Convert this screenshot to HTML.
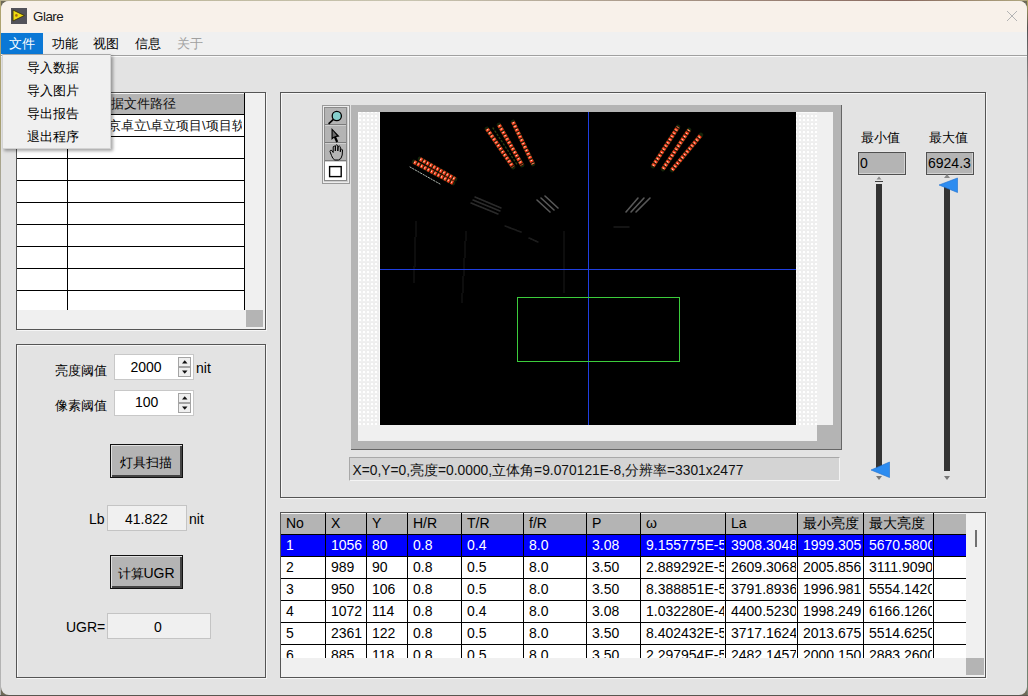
<!DOCTYPE html>
<html><head><meta charset="utf-8">
<style>
*{box-sizing:border-box;margin:0;padding:0}
html,body{width:1028px;height:696px;overflow:hidden;background:#6e6a58}
body{position:relative;font-family:"Liberation Sans",sans-serif;font-size:13px;color:#000}
.a{position:absolute}
.t{position:absolute;white-space:nowrap;line-height:1}
.fr{position:absolute;border:1px solid #555;box-shadow:inset 1px 1px 0 #f6f6f6, 1px 1px 0 #f6f6f6}
.hl{position:absolute;background:#f6f6f6}
.spin{width:13px;height:21px;background:#e6e6e6;border:1px solid #c0c0c0}
.btn{background:#b4b4b4;border:1px solid #111;box-shadow:inset 1px 1px 0 #e0e0e0, inset -2px -2px 0 #444}
.cell{overflow:hidden;font-size:14px}
</style></head><body>
<!-- desktop edges -->
<div class="a" style="left:0;top:0;width:1px;height:696px;background:linear-gradient(#b0a470 0,#a8a070 120px,#a8a8a4 200px,#b4b4b4 100%)"></div>
<div class="a" style="left:0;top:0;width:1028px;height:1px;background:linear-gradient(90deg,#b8b090,#c8c4b0 40%,#8a6a60 88%,#b0a880 100%)"></div>
<div class="a" style="left:1027px;top:0;width:1px;height:696px;background:linear-gradient(#b8a860,#505050 4%,#8a8a88 12%,#a4a4a4 40%,#7a8a78 80%,#708070 100%)"></div>
<div class="a" style="left:0;top:695px;width:1028px;height:1px;background:#5a5650"></div>
<!-- window -->
<div class="a" style="left:1px;top:1px;width:1026px;height:694px;background:#e3e3e3;border-radius:8px;overflow:hidden"></div>
<!-- title bar -->
<div class="a" style="left:1px;top:1px;width:1026px;height:31px;background:#f8f1ea;border-radius:8px 8px 0 0"></div>
<div class="a" style="left:11px;top:8px;width:16px;height:16px;background:#52525a"></div>
<svg class="a" style="left:11px;top:8px" width="16" height="16"><polygon points="2,2 13.4,7.5 2,13" fill="#f0dc10" stroke="#3a3410" stroke-width="0.9"/><circle cx="5.4" cy="7.4" r="1.3" fill="#a86a10"/></svg>
<div class="t" style="left:33px;top:9.5px;font-size:13.4px;letter-spacing:-0.5px;color:#1a1a1a">Glare</div>
<svg class="a" style="left:1006px;top:10px" width="12" height="12"><path d="M1 1L11 11M11 1L1 11" stroke="#b4b4b4" stroke-width="1"/></svg>
<!-- menu bar -->
<div class="a" style="left:1px;top:32px;width:1026px;height:23px;background:#f0f0f0"></div>
<div class="a" style="left:1px;top:33px;width:42px;height:21px;background:#0a78d6"></div>
<div class="t" style="left:9px;top:37px;color:#fff">文件</div>
<div class="t" style="left:52px;top:37px">功能</div>
<div class="t" style="left:93px;top:37px">视图</div>
<div class="t" style="left:135px;top:37px">信息</div>
<div class="t" style="left:177px;top:37px;color:#a0a0a0">关于</div>
<div class="a" style="left:1px;top:55px;width:1026px;height:1px;background:#a0a0a0"></div>
<div class="a" style="left:1px;top:56px;width:1026px;height:1px;background:#fafafa"></div>

<!-- left top table frame -->
<div class="fr" style="left:16px;top:92px;width:250px;height:238px;background:#f0f0f0"></div>
<div class="a" style="left:17px;top:93px;width:228px;height:217px;background:#fff"></div>
<div class="a" style="left:17px;top:93px;width:228px;height:21px;background:#b4b4b4;border-top:1px solid #f6f6f6"></div>
<div class="a" style="left:17px;top:114px;width:228px;height:1px;background:#000"></div>
<div class="a" style="left:17px;top:136px;width:228px;height:1px;background:#000"></div>
<div class="a" style="left:17px;top:158px;width:228px;height:1px;background:#000"></div>
<div class="a" style="left:17px;top:180px;width:228px;height:1px;background:#000"></div>
<div class="a" style="left:17px;top:202px;width:228px;height:1px;background:#000"></div>
<div class="a" style="left:17px;top:224px;width:228px;height:1px;background:#000"></div>
<div class="a" style="left:17px;top:246px;width:228px;height:1px;background:#000"></div>
<div class="a" style="left:17px;top:268px;width:228px;height:1px;background:#000"></div>
<div class="a" style="left:17px;top:290px;width:228px;height:1px;background:#000"></div>
<div class="a" style="left:67px;top:93px;width:1px;height:217px;background:#000"></div>
<div class="a" style="left:244px;top:93px;width:1px;height:217px;background:#000"></div>
<div class="a" style="left:68px;top:93px;width:176px;height:21px;overflow:hidden"><div class="t" style="left:30px;top:4px;color:#111">数据文件路径</div></div>
<div class="a" style="left:68px;top:115px;width:174px;height:21px;overflow:hidden"><div class="t" style="left:26.5px;top:4px;color:#111">北京卓立\卓立项目\项目软件</div></div>

<div class="a" style="left:246px;top:310px;width:17px;height:17px;background:#b4b4b4"></div>

<!-- left bottom panel frame -->
<div class="fr" style="left:16px;top:344px;width:250px;height:334px"></div>


<!-- left bottom panel controls -->
<div class="t" style="left:55px;top:364px">亮度阈值</div>
<div class="a" style="left:114px;top:354px;width:80px;height:26px;background:#fff;border:1px solid #c8c8c8"></div>
<div class="t" style="left:130.5px;top:360px;font-size:14px">2000</div>
<svg class="a" style="left:178px;top:357px" width="13" height="20"><rect x="0.5" y="0.5" width="12" height="9" fill="#efefef" stroke="#a4a4a4"/><rect x="0.5" y="10.5" width="12" height="9" fill="#efefef" stroke="#a4a4a4"/><path d="M4 6.5L9.5 6.5L6.75 3.2Z" fill="#111"/><path d="M4 13.5L9.5 13.5L6.75 16.8Z" fill="#111"/></svg>
<div class="t" style="left:196px;top:361px;font-size:14px">nit</div>
<div class="t" style="left:55px;top:399px">像素阈值</div>
<div class="a" style="left:114px;top:390px;width:80px;height:26px;background:#fff;border:1px solid #c8c8c8"></div>
<div class="t" style="left:135px;top:395px;font-size:14px">100</div>
<svg class="a" style="left:178px;top:393px" width="13" height="20"><rect x="0.5" y="0.5" width="12" height="9" fill="#efefef" stroke="#a4a4a4"/><rect x="0.5" y="10.5" width="12" height="9" fill="#efefef" stroke="#a4a4a4"/><path d="M4 6.5L9.5 6.5L6.75 3.2Z" fill="#111"/><path d="M4 13.5L9.5 13.5L6.75 16.8Z" fill="#111"/></svg>

<div class="a btn" style="left:110px;top:444px;width:73px;height:34px"></div>
<div class="t" style="left:120px;top:455.5px;font-size:13px">灯具扫描</div>

<div class="t" style="left:89px;top:512px;font-size:14px">Lb</div>
<div class="a" style="left:107px;top:505px;width:80px;height:26px;background:#f0f0f0;border:1px solid #c4c4c4"></div>
<div class="t" style="left:125px;top:512px;font-size:14px">41.822</div>
<div class="t" style="left:189px;top:512px;font-size:14px">nit</div>

<div class="a btn" style="left:110px;top:555px;width:73px;height:34px"></div>
<div class="t" style="left:117.5px;top:566px;font-size:13px">计算<span style="font-size:14px">UGR</span></div>

<div class="t" style="left:66px;top:620px;font-size:14px">UGR=</div>
<div class="a" style="left:107px;top:613px;width:104px;height:26px;background:#f0f0f0;border:1px solid #c4c4c4"></div>
<div class="t" style="left:154px;top:620px;font-size:14px">0</div>

<!-- image panel frame -->
<div class="fr" style="left:280px;top:92px;width:706px;height:406px"></div>


<!-- image display -->
<div class="a" style="left:351px;top:105px;width:491px;height:345px;background:#b4b4b4;border-right:1px solid #666;border-bottom:1px solid #666"></div>
<svg class="a" style="left:358px;top:112px" width="459" height="313"><defs><pattern id="dots" x="0" y="-1" width="4" height="4" patternUnits="userSpaceOnUse"><rect width="4" height="4" fill="#eeeeee"/><rect x="0" y="1.5" width="4" height="1" fill="#f3f3f3"/><rect x="1" y="0" width="2" height="2" fill="#ffffff"/></pattern></defs><rect x="0" y="0" width="459" height="313" fill="url(#dots)"/><rect x="0" y="0" width="1" height="313" fill="#fafafa"/><rect x="21" y="0" width="1" height="313" fill="#fafafa"/><rect x="437" y="0" width="22" height="1" fill="#fafafa"/></svg>
<div class="a" style="left:817px;top:112px;width:16px;height:313px;background:#f0f0f0"></div>
<div class="a" style="left:358px;top:425px;width:459px;height:16px;background:#f0f0f0"></div>
<div class="a" style="left:380px;top:112px;width:416px;height:313px;background:#000;overflow:hidden">
<svg width="416" height="313" style="position:absolute;left:0;top:0">
 <g stroke-linecap="round">
 <defs><filter id="bl" x="-20%" y="-20%" width="140%" height="140%"><feGaussianBlur stdDeviation="0.6"/></filter></defs>
 <!-- dim structures -->
 <g filter="url(#bl)">
 <g stroke="#2c2c2c" stroke-width="1.5">
  <line x1="91" y1="91" x2="118" y2="102"/><line x1="93" y1="88" x2="120" y2="99"/><line x1="95" y1="85" x2="121" y2="96"/>
 </g>
 <g stroke="#585858" stroke-width="1.6">
  <line x1="157" y1="88" x2="170" y2="100"/><line x1="161" y1="86" x2="174" y2="98"/><line x1="165" y1="84" x2="178" y2="96"/>
  <line x1="246" y1="100" x2="258" y2="86"/><line x1="251" y1="100" x2="264" y2="86"/><line x1="256" y1="100" x2="270" y2="86"/>
 </g>
 <g stroke="#1e1e1e" stroke-width="1.5">
  <line x1="125" y1="114" x2="141" y2="120"/><line x1="149" y1="126" x2="158" y2="130"/><line x1="234" y1="115" x2="249" y2="115"/>
 </g>
 <g stroke="#070707" stroke-width="3">
  <line x1="36" y1="110" x2="34" y2="170"/><line x1="86" y1="120" x2="82" y2="190"/><line x1="184" y1="120" x2="184" y2="180"/>
 </g>
 </g>
 <!-- lamps -->
 <g stroke="#14240a" stroke-width="4.6">
  <line x1="34" y1="50" x2="73" y2="71"/>
  <line x1="40" y1="47" x2="75" y2="67"/>
  <line x1="107" y1="17" x2="133" y2="55"/>
  <line x1="119" y1="13" x2="142" y2="53"/>
  <line x1="133" y1="10" x2="153" y2="52"/>
  <line x1="273" y1="54" x2="298" y2="15"/>
  <line x1="283" y1="57" x2="309" y2="18"/>
  <line x1="292" y1="58" x2="321" y2="23"/>
 </g>
 <g stroke="#4a6a1a" stroke-width="1.4" stroke-dasharray="1.2 2.6" opacity="0.6">
  <line x1="113" y1="16" x2="138" y2="54"/>
 </g>
 <g stroke="#ff2a16" stroke-width="3.8" stroke-dasharray="2.6 1.2" stroke-linecap="butt">
  <line x1="34" y1="50" x2="73" y2="71"/>
  <line x1="40" y1="47" x2="75" y2="67"/>
  <line x1="107" y1="17" x2="133" y2="55"/>
  <line x1="119" y1="13" x2="142" y2="53"/>
  <line x1="133" y1="10" x2="153" y2="52"/>
  <line x1="273" y1="54" x2="298" y2="15"/>
  <line x1="283" y1="57" x2="309" y2="18"/>
  <line x1="292" y1="58" x2="321" y2="23"/>
 </g>
 <g stroke="#a0c040" stroke-width="3.2" stroke-dasharray="0.6 3.2" stroke-dashoffset="3.1" stroke-linecap="butt" opacity="0.65">
  <line x1="34" y1="50" x2="73" y2="71"/>
  <line x1="40" y1="47" x2="75" y2="67"/>
  <line x1="107" y1="17" x2="133" y2="55"/>
  <line x1="119" y1="13" x2="142" y2="53"/>
  <line x1="133" y1="10" x2="153" y2="52"/>
  <line x1="273" y1="54" x2="298" y2="15"/>
  <line x1="283" y1="57" x2="309" y2="18"/>
  <line x1="292" y1="58" x2="321" y2="23"/>
 </g>
 <g stroke="#ffd8c8" stroke-width="1.4" stroke-dasharray="1 2.8" stroke-dashoffset="-0.4" stroke-linecap="butt">
  <line x1="34" y1="50" x2="73" y2="71"/>
  <line x1="40" y1="47" x2="75" y2="67"/>
  <line x1="107" y1="17" x2="133" y2="55"/>
  <line x1="119" y1="13" x2="142" y2="53"/>
  <line x1="133" y1="10" x2="153" y2="52"/>
  <line x1="273" y1="54" x2="298" y2="15"/>
  <line x1="283" y1="57" x2="309" y2="18"/>
  <line x1="292" y1="58" x2="321" y2="23"/>
 </g>
 <g stroke="#b0b8b0" stroke-width="1" stroke-dasharray="1.5 1.5">
  <line x1="30" y1="55" x2="60" y2="72"/>
 </g>
 </g>
 <line x1="0" y1="157.5" x2="416" y2="157.5" stroke="#1f3fe0" stroke-width="1"/>
 <line x1="208.5" y1="0" x2="208.5" y2="313" stroke="#1f3fe0" stroke-width="1"/>
 <rect x="137.5" y="185.5" width="162" height="64" fill="none" stroke="#3ccc3c" stroke-width="1"/>
</svg>
</div>
<!-- palette -->
<div class="a" style="left:322px;top:105px;width:28px;height:79px;background:#cfcfcf;border:1px solid #9a9a9a;box-shadow:inset 1px 1px 0 #ececec, inset -1px -1px 0 #ececec"></div>
<div class="a" style="left:324px;top:107px;width:23px;height:74px;border:1px solid #8a8a8a"></div>
<div class="a" style="left:325px;top:108px;width:21px;height:17px;background:#b4b4b4;border-bottom:1px solid #7c7c7c"></div>
<div class="a" style="left:325px;top:126px;width:21px;height:17px;background:#b4b4b4;border-bottom:1px solid #7c7c7c"></div>
<div class="a" style="left:325px;top:144px;width:21px;height:17px;background:#b4b4b4;border-bottom:1px solid #7c7c7c"></div>
<div class="a" style="left:325px;top:162px;width:21px;height:18px;background:#fff"></div>
<svg class="a" style="left:325px;top:108px" width="21" height="72">
 <circle cx="11.8" cy="8" r="4.6" fill="#86cfcc" stroke="#000" stroke-width="1.3"/>
 <line x1="8.4" y1="11.4" x2="3.6" y2="15.8" stroke="#000" stroke-width="1.7"/>
 <path d="M6.5 20 L6.5 32 L9 29.8 L11.2 34.6 L13.2 33.6 L11.2 29 L14.6 28.6 Z" fill="#000"/>
 <path d="M7.6 22.6 L7.6 29.2 L11.8 27.6 Z" fill="#6a6a6a"/>
 <path d="M6.5 47.5 L5 43.5 Q5 41.8 6.8 42.4 L8.2 44.5 L8.2 38.8 Q9.2 37.2 10.3 38.8 L10.3 43 L10.6 37.6 Q11.7 36 12.8 37.6 L12.8 43 L13.2 38.6 Q14.3 37.2 15.3 38.8 L15.3 43.8 L15.8 41.6 Q16.8 40.6 17.5 41.8 L17.2 47 Q16.5 51.5 13.4 52 L9.8 52 Q7.6 51 6.5 47.5 Z" fill="none" stroke="#000" stroke-width="1"/>
 <rect x="4.6" y="58.6" width="11.6" height="10" fill="none" stroke="#000" stroke-width="1.4"/>
</svg>
<!-- status bar -->
<div class="a" style="left:349px;top:457px;width:491px;height:24px;background:#d4d4d4;border-top:1px solid #a8a8a8;border-left:1px solid #a8a8a8;border-bottom:1px solid #f4f4f4;border-right:1px solid #f4f4f4"></div>
<div class="t" style="left:352.5px;top:463.5px;font-size:13.8px;color:#111">X=0,Y=0,亮度=0.0000,立体角=9.070121E-8,分辨率=3301x2477</div>

<!-- sliders -->
<div class="t" style="left:861px;top:131px">最小值</div>
<div class="t" style="left:929px;top:131px">最大值</div>
<div class="a" style="left:858px;top:152px;width:48px;height:23px;background:#b4b4b4;border:1px solid #505050;box-shadow:inset -1px -1px 0 #d2d2d2, 0 0 0 1px #e8e8e8"></div>
<div class="a" style="left:926px;top:152px;width:48px;height:23px;background:#b4b4b4;border:1px solid #505050;box-shadow:inset -1px -1px 0 #d2d2d2, 0 0 0 1px #e8e8e8"></div>
<div class="t" style="left:860px;top:156px;font-size:14px">0</div>
<div class="t" style="left:928px;top:156px;font-size:14px;">6924.3</div>
<div class="a" style="left:876px;top:184px;width:6px;height:286px;background:#333"></div>
<div class="a" style="left:944px;top:183px;width:6px;height:288px;background:#333"></div>
<svg class="a" style="left:860px;top:174px" width="100" height="310">
 <path d="M16.5 5.5 L21.5 5.5 L19 2.5 Z" fill="#8a8a8a"/><line x1="15" y1="7.5" x2="23" y2="7.5" stroke="#404040"/>
 <path d="M84 4 L90 4 L87 0 Z" fill="#888"/>
 <path d="M16 302 L22 302 L19 306 Z" fill="#777"/>
 <path d="M84 302 L90 302 L87 306 Z" fill="#777"/>
 <path d="M11 296 L29.5 288 L29.5 303.5 Z" fill="#2d8cf0" stroke="#1c6fd0" stroke-width="0.6"/>
 <path d="M79 11 L97.5 4 L97.5 18.5 Z" fill="#2d8cf0" stroke="#1c6fd0" stroke-width="0.6"/>
</svg>

<!-- bottom table frame -->
<div class="fr" style="left:280px;top:512px;width:706px;height:166px;background:#f0f0f0"></div>

<!-- bottom table -->
<div class="a" style="left:281px;top:513px;width:685px;height:145px;background:#fff;overflow:hidden">
<div class="a" style="left:0;top:0;width:685px;height:22px;background:#b4b4b4;border-top:1px solid #f6f6f6"></div>
<div class="a" style="left:0;top:22px;width:685px;height:22px;background:#0000ff"></div>
<div class="a" style="left:0;top:21px;width:685px;height:1px;background:#000"></div>
<div class="a" style="left:0;top:43px;width:685px;height:1px;background:#000"></div>
<div class="a" style="left:0;top:65px;width:685px;height:1px;background:#000"></div>
<div class="a" style="left:0;top:87px;width:685px;height:1px;background:#000"></div>
<div class="a" style="left:0;top:109px;width:685px;height:1px;background:#000"></div>
<div class="a" style="left:0;top:131px;width:685px;height:1px;background:#000"></div>
<div class="a" style="left:44px;top:0;width:1px;height:145px;background:#000"></div>
<div class="a" style="left:85px;top:0;width:1px;height:145px;background:#000"></div>
<div class="a" style="left:126px;top:0;width:1px;height:145px;background:#000"></div>
<div class="a" style="left:180px;top:0;width:1px;height:145px;background:#000"></div>
<div class="a" style="left:242px;top:0;width:1px;height:145px;background:#000"></div>
<div class="a" style="left:305px;top:0;width:1px;height:145px;background:#000"></div>
<div class="a" style="left:359px;top:0;width:1px;height:145px;background:#000"></div>
<div class="a" style="left:444px;top:0;width:1px;height:145px;background:#000"></div>
<div class="a" style="left:516px;top:0;width:1px;height:145px;background:#000"></div>
<div class="a" style="left:582px;top:0;width:1px;height:145px;background:#000"></div>
<div class="a" style="left:652px;top:0;width:1px;height:145px;background:#000"></div>
<div class="a cell" style="left:0px;top:0;width:42px;height:20px"><span class="t" style="left:5px;top:3.4px">No</span></div>
<div class="a cell" style="left:45px;top:0;width:38px;height:20px"><span class="t" style="left:5px;top:3.4px">X</span></div>
<div class="a cell" style="left:86px;top:0;width:38px;height:20px"><span class="t" style="left:5px;top:3.4px">Y</span></div>
<div class="a cell" style="left:127px;top:0;width:51px;height:20px"><span class="t" style="left:5px;top:3.4px">H/R</span></div>
<div class="a cell" style="left:181px;top:0;width:59px;height:20px"><span class="t" style="left:5px;top:3.4px">T/R</span></div>
<div class="a cell" style="left:243px;top:0;width:60px;height:20px"><span class="t" style="left:5px;top:3.4px">f/R</span></div>
<div class="a cell" style="left:306px;top:0;width:51px;height:20px"><span class="t" style="left:5px;top:3.4px">P</span></div>
<div class="a cell" style="left:360px;top:0;width:82px;height:20px"><span class="t" style="left:5px;top:3.4px">ω</span></div>
<div class="a cell" style="left:445px;top:0;width:69px;height:20px"><span class="t" style="left:5px;top:3.4px">La</span></div>
<div class="a cell" style="left:517px;top:0;width:63px;height:20px"><span class="t" style="left:5px;top:3.4px">最小亮度</span></div>
<div class="a cell" style="left:583px;top:0;width:67px;height:20px"><span class="t" style="left:5px;top:3.4px">最大亮度</span></div>
<div class="a cell" style="left:0px;top:22px;width:43px;height:21px;color:#fff"><span class="t" style="left:5px;top:3.4px">1</span></div>
<div class="a cell" style="left:45px;top:22px;width:39px;height:21px;color:#fff"><span class="t" style="left:5px;top:3.4px">1056</span></div>
<div class="a cell" style="left:86px;top:22px;width:39px;height:21px;color:#fff"><span class="t" style="left:5px;top:3.4px">80</span></div>
<div class="a cell" style="left:127px;top:22px;width:52px;height:21px;color:#fff"><span class="t" style="left:5px;top:3.4px">0.8</span></div>
<div class="a cell" style="left:181px;top:22px;width:60px;height:21px;color:#fff"><span class="t" style="left:5px;top:3.4px">0.4</span></div>
<div class="a cell" style="left:243px;top:22px;width:61px;height:21px;color:#fff"><span class="t" style="left:5px;top:3.4px">8.0</span></div>
<div class="a cell" style="left:306px;top:22px;width:52px;height:21px;color:#fff"><span class="t" style="left:5px;top:3.4px">3.08</span></div>
<div class="a cell" style="left:360px;top:22px;width:83px;height:21px;color:#fff"><span class="t" style="left:5px;top:3.4px">9.155775E-5</span></div>
<div class="a cell" style="left:445px;top:22px;width:70px;height:21px;color:#fff"><span class="t" style="left:5px;top:3.4px">3908.3048</span></div>
<div class="a cell" style="left:517px;top:22px;width:64px;height:21px;color:#fff"><span class="t" style="left:5px;top:3.4px">1999.305</span></div>
<div class="a cell" style="left:583px;top:22px;width:68px;height:21px;color:#fff"><span class="t" style="left:5px;top:3.4px">5670.5800</span></div>
<div class="a cell" style="left:0px;top:44px;width:43px;height:21px;color:#000"><span class="t" style="left:5px;top:3.4px">2</span></div>
<div class="a cell" style="left:45px;top:44px;width:39px;height:21px;color:#000"><span class="t" style="left:5px;top:3.4px">989</span></div>
<div class="a cell" style="left:86px;top:44px;width:39px;height:21px;color:#000"><span class="t" style="left:5px;top:3.4px">90</span></div>
<div class="a cell" style="left:127px;top:44px;width:52px;height:21px;color:#000"><span class="t" style="left:5px;top:3.4px">0.8</span></div>
<div class="a cell" style="left:181px;top:44px;width:60px;height:21px;color:#000"><span class="t" style="left:5px;top:3.4px">0.5</span></div>
<div class="a cell" style="left:243px;top:44px;width:61px;height:21px;color:#000"><span class="t" style="left:5px;top:3.4px">8.0</span></div>
<div class="a cell" style="left:306px;top:44px;width:52px;height:21px;color:#000"><span class="t" style="left:5px;top:3.4px">3.50</span></div>
<div class="a cell" style="left:360px;top:44px;width:83px;height:21px;color:#000"><span class="t" style="left:5px;top:3.4px">2.889292E-5</span></div>
<div class="a cell" style="left:445px;top:44px;width:70px;height:21px;color:#000"><span class="t" style="left:5px;top:3.4px">2609.3068</span></div>
<div class="a cell" style="left:517px;top:44px;width:64px;height:21px;color:#000"><span class="t" style="left:5px;top:3.4px">2005.856</span></div>
<div class="a cell" style="left:583px;top:44px;width:68px;height:21px;color:#000"><span class="t" style="left:5px;top:3.4px">3111.9090</span></div>
<div class="a cell" style="left:0px;top:66px;width:43px;height:21px;color:#000"><span class="t" style="left:5px;top:3.4px">3</span></div>
<div class="a cell" style="left:45px;top:66px;width:39px;height:21px;color:#000"><span class="t" style="left:5px;top:3.4px">950</span></div>
<div class="a cell" style="left:86px;top:66px;width:39px;height:21px;color:#000"><span class="t" style="left:5px;top:3.4px">106</span></div>
<div class="a cell" style="left:127px;top:66px;width:52px;height:21px;color:#000"><span class="t" style="left:5px;top:3.4px">0.8</span></div>
<div class="a cell" style="left:181px;top:66px;width:60px;height:21px;color:#000"><span class="t" style="left:5px;top:3.4px">0.5</span></div>
<div class="a cell" style="left:243px;top:66px;width:61px;height:21px;color:#000"><span class="t" style="left:5px;top:3.4px">8.0</span></div>
<div class="a cell" style="left:306px;top:66px;width:52px;height:21px;color:#000"><span class="t" style="left:5px;top:3.4px">3.50</span></div>
<div class="a cell" style="left:360px;top:66px;width:83px;height:21px;color:#000"><span class="t" style="left:5px;top:3.4px">8.388851E-5</span></div>
<div class="a cell" style="left:445px;top:66px;width:70px;height:21px;color:#000"><span class="t" style="left:5px;top:3.4px">3791.8936</span></div>
<div class="a cell" style="left:517px;top:66px;width:64px;height:21px;color:#000"><span class="t" style="left:5px;top:3.4px">1996.981</span></div>
<div class="a cell" style="left:583px;top:66px;width:68px;height:21px;color:#000"><span class="t" style="left:5px;top:3.4px">5554.1420</span></div>
<div class="a cell" style="left:0px;top:88px;width:43px;height:21px;color:#000"><span class="t" style="left:5px;top:3.4px">4</span></div>
<div class="a cell" style="left:45px;top:88px;width:39px;height:21px;color:#000"><span class="t" style="left:5px;top:3.4px">1072</span></div>
<div class="a cell" style="left:86px;top:88px;width:39px;height:21px;color:#000"><span class="t" style="left:5px;top:3.4px">114</span></div>
<div class="a cell" style="left:127px;top:88px;width:52px;height:21px;color:#000"><span class="t" style="left:5px;top:3.4px">0.8</span></div>
<div class="a cell" style="left:181px;top:88px;width:60px;height:21px;color:#000"><span class="t" style="left:5px;top:3.4px">0.4</span></div>
<div class="a cell" style="left:243px;top:88px;width:61px;height:21px;color:#000"><span class="t" style="left:5px;top:3.4px">8.0</span></div>
<div class="a cell" style="left:306px;top:88px;width:52px;height:21px;color:#000"><span class="t" style="left:5px;top:3.4px">3.08</span></div>
<div class="a cell" style="left:360px;top:88px;width:83px;height:21px;color:#000"><span class="t" style="left:5px;top:3.4px">1.032280E-4</span></div>
<div class="a cell" style="left:445px;top:88px;width:70px;height:21px;color:#000"><span class="t" style="left:5px;top:3.4px">4400.5230</span></div>
<div class="a cell" style="left:517px;top:88px;width:64px;height:21px;color:#000"><span class="t" style="left:5px;top:3.4px">1998.249</span></div>
<div class="a cell" style="left:583px;top:88px;width:68px;height:21px;color:#000"><span class="t" style="left:5px;top:3.4px">6166.1260</span></div>
<div class="a cell" style="left:0px;top:110px;width:43px;height:21px;color:#000"><span class="t" style="left:5px;top:3.4px">5</span></div>
<div class="a cell" style="left:45px;top:110px;width:39px;height:21px;color:#000"><span class="t" style="left:5px;top:3.4px">2361</span></div>
<div class="a cell" style="left:86px;top:110px;width:39px;height:21px;color:#000"><span class="t" style="left:5px;top:3.4px">122</span></div>
<div class="a cell" style="left:127px;top:110px;width:52px;height:21px;color:#000"><span class="t" style="left:5px;top:3.4px">0.8</span></div>
<div class="a cell" style="left:181px;top:110px;width:60px;height:21px;color:#000"><span class="t" style="left:5px;top:3.4px">0.5</span></div>
<div class="a cell" style="left:243px;top:110px;width:61px;height:21px;color:#000"><span class="t" style="left:5px;top:3.4px">8.0</span></div>
<div class="a cell" style="left:306px;top:110px;width:52px;height:21px;color:#000"><span class="t" style="left:5px;top:3.4px">3.50</span></div>
<div class="a cell" style="left:360px;top:110px;width:83px;height:21px;color:#000"><span class="t" style="left:5px;top:3.4px">8.402432E-5</span></div>
<div class="a cell" style="left:445px;top:110px;width:70px;height:21px;color:#000"><span class="t" style="left:5px;top:3.4px">3717.1624</span></div>
<div class="a cell" style="left:517px;top:110px;width:64px;height:21px;color:#000"><span class="t" style="left:5px;top:3.4px">2013.675</span></div>
<div class="a cell" style="left:583px;top:110px;width:68px;height:21px;color:#000"><span class="t" style="left:5px;top:3.4px">5514.6250</span></div>
<div class="a cell" style="left:0px;top:132px;width:43px;height:21px;color:#000"><span class="t" style="left:5px;top:3.4px">6</span></div>
<div class="a cell" style="left:45px;top:132px;width:39px;height:21px;color:#000"><span class="t" style="left:5px;top:3.4px">885</span></div>
<div class="a cell" style="left:86px;top:132px;width:39px;height:21px;color:#000"><span class="t" style="left:5px;top:3.4px">118</span></div>
<div class="a cell" style="left:127px;top:132px;width:52px;height:21px;color:#000"><span class="t" style="left:5px;top:3.4px">0.8</span></div>
<div class="a cell" style="left:181px;top:132px;width:60px;height:21px;color:#000"><span class="t" style="left:5px;top:3.4px">0.5</span></div>
<div class="a cell" style="left:243px;top:132px;width:61px;height:21px;color:#000"><span class="t" style="left:5px;top:3.4px">8.0</span></div>
<div class="a cell" style="left:306px;top:132px;width:52px;height:21px;color:#000"><span class="t" style="left:5px;top:3.4px">3.50</span></div>
<div class="a cell" style="left:360px;top:132px;width:83px;height:21px;color:#000"><span class="t" style="left:5px;top:3.4px">2.297954E-5</span></div>
<div class="a cell" style="left:445px;top:132px;width:70px;height:21px;color:#000"><span class="t" style="left:5px;top:3.4px">2482.1457</span></div>
<div class="a cell" style="left:517px;top:132px;width:64px;height:21px;color:#000"><span class="t" style="left:5px;top:3.4px">2000.150</span></div>
<div class="a cell" style="left:583px;top:132px;width:68px;height:21px;color:#000"><span class="t" style="left:5px;top:3.4px">2883.2600</span></div>
</div>
<div class="a" style="left:966px;top:513px;width:19px;height:145px;background:#f0f0f0"></div>
<div class="a" style="left:975px;top:530px;width:2px;height:17px;background:#707070"></div>
<div class="a" style="left:281px;top:658px;width:685px;height:18px;background:#f0f0f0"></div>
<div class="a" style="left:966px;top:658px;width:18px;height:17px;background:#b4b4b4"></div>
<!-- dropdown -->
<div class="a" style="left:2px;top:54px;width:109px;height:95px;background:#f0f0f0;border:1px solid #d4d4d4;border-top-color:#a8a8a8;box-shadow:2px 2px 3px rgba(0,0,0,0.35)"></div>
<div class="t" style="left:27px;top:61px">导入数据</div>
<div class="t" style="left:27px;top:84px">导入图片</div>
<div class="t" style="left:27px;top:107px">导出报告</div>
<div class="t" style="left:27px;top:130px">退出程序</div>
</body></html>
